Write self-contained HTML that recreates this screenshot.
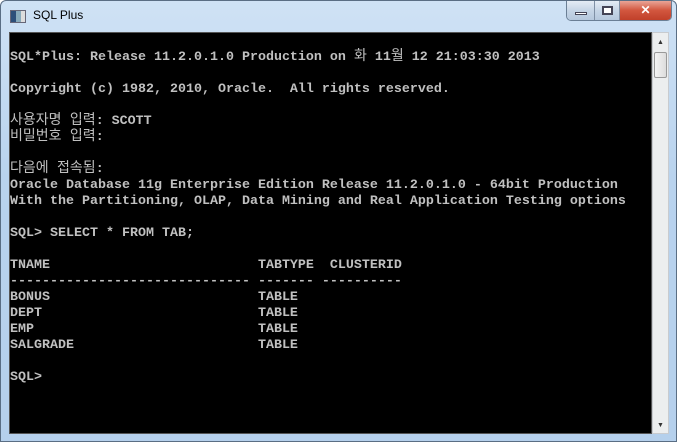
<!DOCTYPE html>
<html><head><meta charset="utf-8"><style>
*{margin:0;padding:0;box-sizing:border-box}
body{width:677px;height:442px;overflow:hidden;background:#fff}
.win{position:absolute;left:0;top:0;width:677px;height:442px;border:1px solid #5a6e84;border-radius:6px 6px 0 0;background:linear-gradient(#cfe2f5,#b9d3ee 40%,#b5d0ec);}
.title{position:absolute;left:32px;top:7px;font:12px "Liberation Sans",sans-serif;color:#000}
.ico{position:absolute;left:9px;top:9px;width:16px;height:13px;background:linear-gradient(90deg,#2d4f7a 0 5px,#8ab 5px 10px,#ddd 10px);border:1px solid #667}
.btns{position:absolute;left:565px;top:0;width:106px;height:20px;border:1px solid #6b7f95;border-top:none;border-radius:0 0 5px 5px;overflow:hidden;display:flex}
.b{height:19px;background:linear-gradient(#e4ecf5,#c6d5e6 50%,#b5c8dd);border-right:1px solid #7f90a5;width:28px;position:relative}
.x{flex:1;background:linear-gradient(#e9a597,#d2563e 50%,#c0402a);border:none;color:#fff;font:bold 12px "Liberation Sans",sans-serif;text-align:center;line-height:19px}
.con{position:absolute;left:8px;top:31px;width:643px;height:402px;background:#000;border:1px solid #555}
pre{position:absolute;left:0px;top:17px;font:bold 13.33px/16px "Liberation Mono","Noto Sans CJK KR",monospace;color:#c0c0c0;letter-spacing:0}
pre k{font-weight:normal;font-size:14px;line-height:1px}
.sb{position:absolute;left:651px;top:31px;width:17px;height:402px;background:#eceeef;border:1px solid #c8cbcf}
.th{position:absolute;left:1px;top:19px;width:13px;height:26px;background:linear-gradient(90deg,#f4f4f4,#dcdcdc);border:1px solid #999;border-radius:2px}
</style></head><body>
<div class="win">
<div class="ico"></div><div class="title">SQL Plus</div>
<div class="btns"><div class="b"><div style="position:absolute;left:8px;top:11px;width:12px;height:3px;background:#fff;border:1px solid #445"></div></div><div class="b" style="width:25px"><div style="position:absolute;left:7px;top:5px;width:11px;height:9px;border:2px solid #445;background:#fff"></div></div><div class="x">✕</div></div>
<div class="con"><pre>SQL*Plus: Release 11.2.0.1.0 Production on <k>화</k> 11<k>월</k> 12 21:03:30 2013

Copyright (c) 1982, 2010, Oracle.  All rights reserved.

<k>사용자명 입력</k>: SCOTT
<k>비밀번호 입력</k>:

<k>다음에 접속됨</k>:
Oracle Database 11g Enterprise Edition Release 11.2.0.1.0 - 64bit Production
With the Partitioning, OLAP, Data Mining and Real Application Testing options

SQL&gt; SELECT * FROM TAB;

TNAME                          TABTYPE  CLUSTERID
------------------------------ ------- ----------
BONUS                          TABLE
DEPT                           TABLE
EMP                            TABLE
SALGRADE                       TABLE

SQL&gt;</pre></div>
<div class="sb"><div style="position:absolute;left:4px;top:5px;font-size:7px;color:#333">▲</div><div class="th"></div><div style="position:absolute;left:4px;bottom:4px;font-size:7px;color:#333">▼</div></div>
</div>
</body></html>
